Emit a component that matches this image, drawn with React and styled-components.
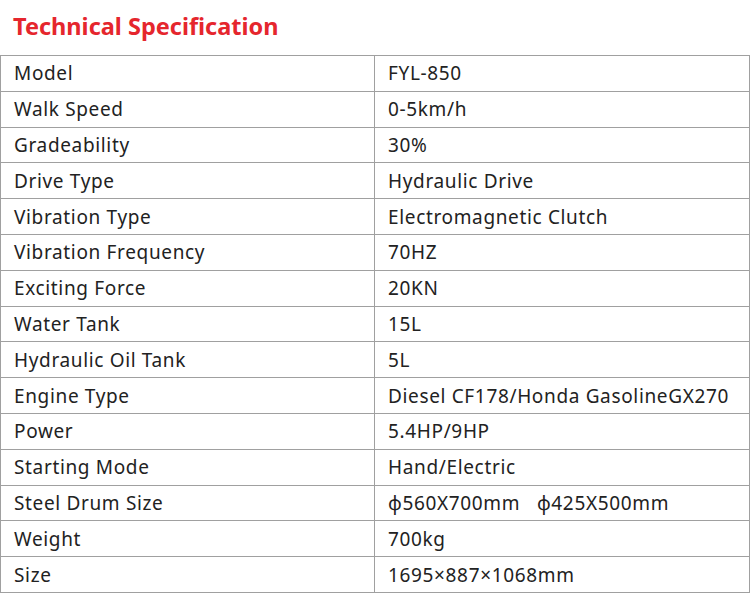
import React from "react";
import styled, { createGlobalStyle } from "styled-components";

const specs = [
  ["Model", "FYL-850"],
  ["Walk Speed", "0-5km/h"],
  ["Gradeability", "30%"],
  ["Drive Type", "Hydraulic Drive"],
  ["Vibration Type", "Electromagnetic Clutch"],
  ["Vibration Frequency", "70HZ"],
  ["Exciting Force", "20KN"],
  ["Water Tank", "15L"],
  ["Hydraulic Oil Tank", "5L"],
  ["Engine Type", "Diesel CF178/Honda GasolineGX270"],
  ["Power", "5.4HP/9HP"],
  ["Starting Mode", "Hand/Electric"],
  ["Steel Drum Size", "ϕ560X700mm\u00a0\u00a0\u00a0ϕ425X500mm"],
  ["Weight", "700kg"],
  ["Size", "1695×887×1068mm"],
];

const GlobalStyle = createGlobalStyle`
  body {
    margin: 0;
    background: #ffffff;
    font-family: "Noto Sans", "Open Sans", sans-serif;
  }
`;

const Page = styled.div`
  width: 750px;
  height: 607px;
  background: #fff;
`;

const Title = styled.h2`
  margin: 0;
  padding: 10px 0 0 13px;
  height: 46px;
  box-sizing: border-box;
  font-size: 23.5px;
  font-weight: 700;
  color: #e5262d;
  line-height: 32px;
`;

const Table = styled.table`
  width: 750px;
  border-collapse: collapse;
  table-layout: fixed;
  margin-top: 9px;
`;

const Row = styled.tr`
  height: 35.8px;
`;

const Cell = styled.td`
  border: 1px solid #a0a0a0;
  padding: 0 0 0 13px;
  font-size: 19px;
  letter-spacing: 0.65px;
  color: #222222;
  white-space: nowrap;
  width: ${(p) => (p.$label ? "360px" : "auto")};
`;

export default function App() {
  return (
    <Page>
      <GlobalStyle />
      <Title>Technical Specification</Title>
      <Table>
        <tbody>
          {specs.map(([k, v]) => (
            <Row key={k}>
              <Cell $label>{k}</Cell>
              <Cell>{v}</Cell>
            </Row>
          ))}
        </tbody>
      </Table>
    </Page>
  );
}
